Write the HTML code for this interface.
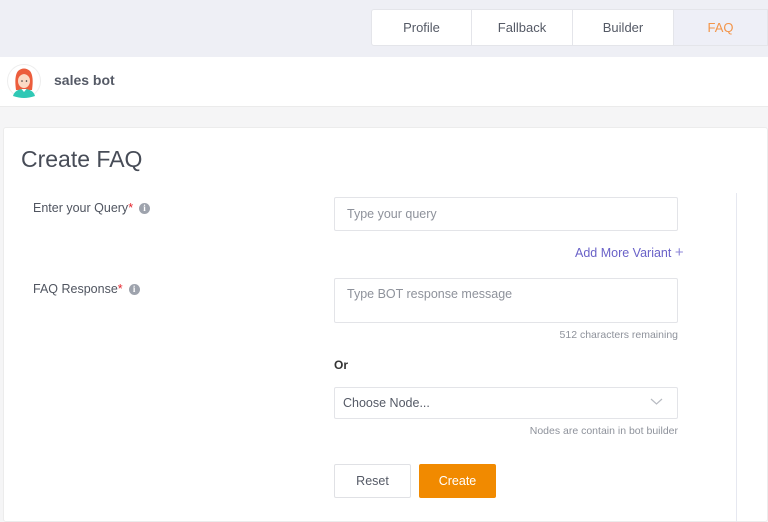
<!DOCTYPE html>
<html><head><style>
*{margin:0;padding:0;box-sizing:border-box}
body{width:768px;height:522px;overflow:hidden;background:#f5f5f6;font-family:"Liberation Sans",sans-serif;position:relative}
.a{position:absolute}
.top{left:0;top:0;width:768px;height:57px;background:#eeeff5}
.tab{top:9px;height:37px;background:#fff;border:1px solid #e4e5ea;font-size:13px;color:#555a66;text-align:center;line-height:35px}
.hdr{left:0;top:57px;width:768px;height:50px;background:#fff;border-bottom:1px solid #ebebeb}
.card{left:3px;top:127px;width:765px;height:395px;background:#fff;border:1px solid #ececec;border-radius:3px}
.lbl{font-size:12.5px;color:#505560}
.req{color:#e5252d}
.info{display:inline-block;width:11px;height:11px;border-radius:50%;background:#9ea3ad;color:#fff;font-size:9px;font-weight:bold;text-align:center;line-height:11px;font-family:"Liberation Serif",serif;vertical-align:1px;margin-left:6px}
.inp{left:334px;width:344px;border:1px solid #e3e4e8;border-radius:2px;font-size:12.5px;color:#8e929b;padding-left:12px}
.small{font-size:10.5px;color:#8e929b;text-align:right}
</style></head><body>
<div class="a top"></div>
<div class="a tab" style="left:371px;width:101px;border-radius:3px 0 0 3px">Profile</div>
<div class="a tab" style="left:471px;width:102px">Fallback</div>
<div class="a tab" style="left:572px;width:102px">Builder</div>
<div class="a tab" style="left:673px;width:95px;background:#eeeff7;color:#f3954a">FAQ</div>
<div class="a hdr"></div>
<svg class="a" style="left:7px;top:64px" width="34" height="36" viewBox="0 0 34 36">
<circle cx="17" cy="17" r="16.5" fill="#fff" stroke="#eee"/>
<path d="M9 26 Q7 12 11 7 Q17 2 23 7 Q27 12 25 26Z" fill="#ec5d3c"/>
<ellipse cx="17" cy="17" rx="6" ry="7" fill="#fbd9c4"/>
<path d="M11 14 Q17 6 23 14 Q22 9 17 8 Q12 9 11 14Z" fill="#ec5d3c"/>
<circle cx="15" cy="17" r=".8" fill="#333"/><circle cx="19.5" cy="17" r=".8" fill="#333"/>
<path d="M6 32 Q8 25 17 25 Q26 25 28 32 Q22 34 17 34 Q12 34 6 32Z" fill="#2fc8b5"/>
<path d="M14.5 25 L17 28 L19.5 25Z" fill="#fff"/>
</svg>
<div class="a" style="left:54px;top:72px;font-size:14px;font-weight:bold;color:#555a66">sales bot</div>
<div class="a card"></div>
<div class="a" style="left:736px;top:193px;width:1px;height:329px;background:#e6e8f0"></div>
<div class="a" style="left:21px;top:146px;font-size:23px;color:#474c57">Create FAQ</div>
<div class="a lbl" style="left:33px;top:201px">Enter your Query<span class="req">*</span><span class="info">i</span></div>
<div class="a lbl" style="left:33px;top:282px">FAQ Response<span class="req">*</span><span class="info">i</span></div>
<div class="a inp" style="top:197px;height:34px;line-height:32px">Type your query</div>
<div class="a" style="left:575px;top:244px;font-size:12.5px;color:#6a62c8">Add More Variant <span style="font-size:15px;color:#8c86d8">+</span></div>
<div class="a inp" style="top:278px;height:45px;padding-top:8px">Type BOT response message</div>
<div class="a small" style="left:334px;width:344px;top:329px">512 characters remaining</div>
<div class="a" style="left:334px;top:358px;font-size:12px;font-weight:bold;color:#333">Or</div>
<div class="a inp" style="top:387px;height:32px;line-height:30px;padding-left:8px;color:#555a66">Choose Node...</div>
<svg class="a" style="left:650px;top:398px" width="13" height="8"><path d="M1 1 L6.5 6 L12 1" fill="none" stroke="#b8bbc2" stroke-width="1.2"/></svg>
<div class="a small" style="left:334px;width:344px;top:425px">Nodes are contain in bot builder</div>
<div class="a" style="left:334px;top:464px;width:77px;height:34px;border:1px solid #e0e1e5;border-radius:2px;text-align:center;line-height:32px;font-size:12.5px;color:#555a66">Reset</div>
<div class="a" style="left:419px;top:464px;width:77px;height:34px;background:#f18a00;border-radius:2px;text-align:center;line-height:34px;font-size:12.5px;color:#fff">Create</div>
</body></html>
